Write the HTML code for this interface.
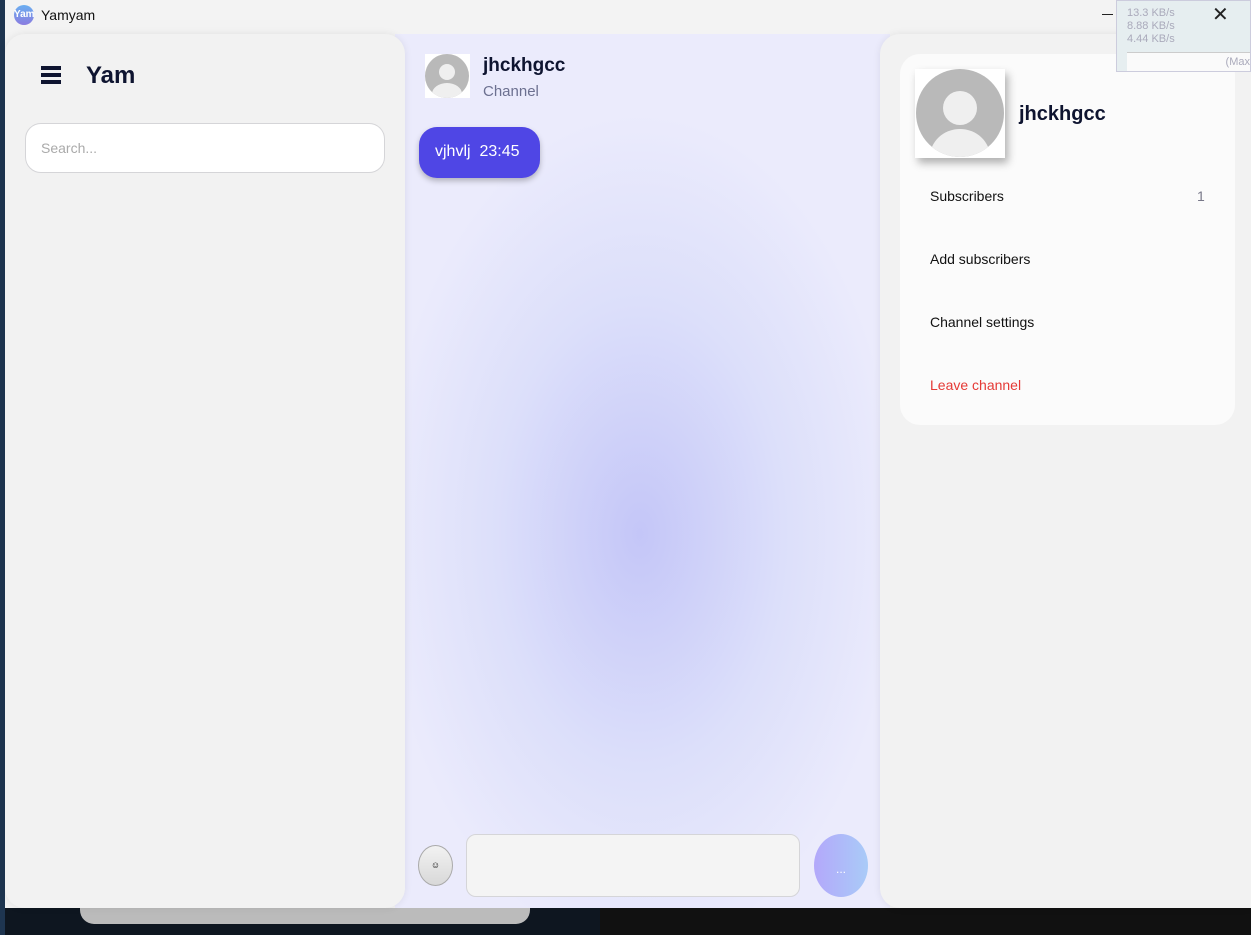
<!DOCTYPE html>
<html><head><style>
*{margin:0;padding:0;box-sizing:border-box}
body{width:1251px;height:935px;overflow:hidden;background:#0e1620;font-family:"Liberation Sans",sans-serif;position:relative}
.abs{position:absolute}
</style></head><body>
<div class="abs" style="left:0;top:0;width:5px;height:935px;background:#1e3550"></div>
<div class="abs" style="left:600px;top:908px;width:651px;height:27px;background:#111"></div>
<div class="abs" style="left:80px;top:900px;width:450px;height:24px;background:#bbb;border-radius:0 0 14px 14px"></div>
<div class="abs" style="left:5px;top:0;width:1246px;height:908px;background:#f3f3f3"></div>
<!-- title bar -->
<div class="abs" style="left:14px;top:5px;width:20px;height:20px;border-radius:50%;background:linear-gradient(#6aaef0,#8a7ce0);color:#fff;font-size:10px;font-weight:bold;text-align:center;line-height:20px">Yam</div>
<div class="abs" style="left:41px;top:7px;font-size:14px;color:#111">Yamyam</div>
<div class="abs" style="left:1102px;top:14px;width:11px;height:1px;background:#222"></div>
<!-- middle -->
<div class="abs" style="left:395px;top:34px;width:495px;height:874px;background:radial-gradient(ellipse 260px 420px at 245px 500px,#c4c6f8,#dcdffa 55%,#ebebfc)"></div>
<!-- left panel -->
<div class="abs" style="left:5px;top:34px;width:400px;height:874px;background:#f2f2f2;border-radius:20px;box-shadow:0 0 8px rgba(0,0,0,.08)"></div>
<div class="abs" style="left:41px;top:66px;width:20px;height:4px;background:#0e1430;box-shadow:0 7px 0 #0e1430,0 14px 0 #0e1430"></div>
<div class="abs" style="left:86px;top:62px;font-size:24px;font-weight:bold;color:#0e1430">Yam</div>
<div class="abs" style="left:25px;top:123px;width:360px;height:50px;background:#fff;border:1px solid #d5d5d8;border-radius:16px;font-size:14px;color:#aaa;padding:16px 0 0 15px">Search...</div>
<!-- chat header -->
<div class="abs" style="left:425px;top:54px;width:45px;height:44px;background:#fff"><svg width="45" height="44"><defs><clipPath id="c1"><circle cx="22" cy="22" r="22"/></clipPath></defs><circle cx="22" cy="22" r="22" fill="#b9b9b9"/><g clip-path="url(#c1)"><circle cx="22" cy="18" r="8" fill="#efefef"/><ellipse cx="22" cy="40" rx="15" ry="11" fill="#efefef"/></g></svg></div>
<div class="abs" style="left:483px;top:55px;font-size:19px;font-weight:bold;color:#0e1430">jhckhgcc</div>
<div class="abs" style="left:483px;top:83px;font-size:15px;color:#6c7090">Channel</div>
<div class="abs" style="left:419px;top:127px;width:121px;height:51px;background:#4f46e5;border-radius:18px;box-shadow:0 3px 6px rgba(0,0,0,.25);color:#fff;font-size:16px;padding:16px 0 0 16px">vjhvlj&nbsp;&nbsp;23:45</div>
<!-- input row -->
<div class="abs" style="left:418px;top:845px;width:35px;height:41px;border-radius:50%;background:linear-gradient(#f2f2f2,#d8d8d8);border:1px solid #aaa;font-size:9px;text-align:center;line-height:39px">☺</div>
<div class="abs" style="left:466px;top:834px;width:334px;height:63px;background:#f4f4f4;border:1px solid #d5d5d8;border-radius:10px"></div>
<div class="abs" style="left:814px;top:834px;width:54px;height:63px;border-radius:50%;background:linear-gradient(90deg,#b3a8fa,#a9cbf8);color:#fff;text-align:center;line-height:70px;font-size:12px">...</div>
<!-- right panel -->
<div class="abs" style="left:880px;top:34px;width:371px;height:874px;background:#f2f2f2;border-radius:20px 0 0 20px;box-shadow:0 0 8px rgba(0,0,0,.08)"></div>
<div class="abs" style="left:900px;top:54px;width:335px;height:371px;background:#fbfbfb;border-radius:20px"></div>
<div class="abs" style="left:915px;top:69px;width:90px;height:89px;background:#fff;box-shadow:3px 5px 8px rgba(0,0,0,.3)"><svg width="90" height="89"><defs><clipPath id="c2"><circle cx="45" cy="44" r="44"/></clipPath></defs><circle cx="45" cy="44" r="44" fill="#b9b9b9"/><g clip-path="url(#c2)"><circle cx="45" cy="39" r="17" fill="#efefef"/><ellipse cx="45" cy="88" rx="30" ry="28" fill="#efefef"/></g></svg></div>
<div class="abs" style="left:1019px;top:103px;font-size:20px;font-weight:bold;color:#0e1430">jhckhgcc</div>
<div class="abs" style="left:930px;top:188px;font-size:14px;color:#111">Subscribers</div>
<div class="abs" style="left:1197px;top:188px;font-size:14px;color:#778">1</div>
<div class="abs" style="left:930px;top:251px;font-size:14px;color:#111">Add subscribers</div>
<div class="abs" style="left:930px;top:314px;font-size:14px;color:#111">Channel settings</div>
<div class="abs" style="left:930px;top:377px;font-size:14px;color:#e53935">Leave channel</div>
<!-- netspeed widget -->
<div class="abs" style="left:1116px;top:0;width:135px;height:72px;background:#e6eef0;border:1px solid #ccd;font-size:11px;color:#aab;line-height:13px;padding-left:10px">
<div style="height:52px;border-bottom:1px solid #ccc;padding-top:6px">13.3 KB/s<br>8.88 KB/s<br>4.44 KB/s</div><div style="background:#fafafa;text-align:right;height:18px;line-height:18px">(Max</div></div>
<div class="abs" style="left:1212px;top:2px;font-size:20px;color:#222">✕</div>
</body></html>
